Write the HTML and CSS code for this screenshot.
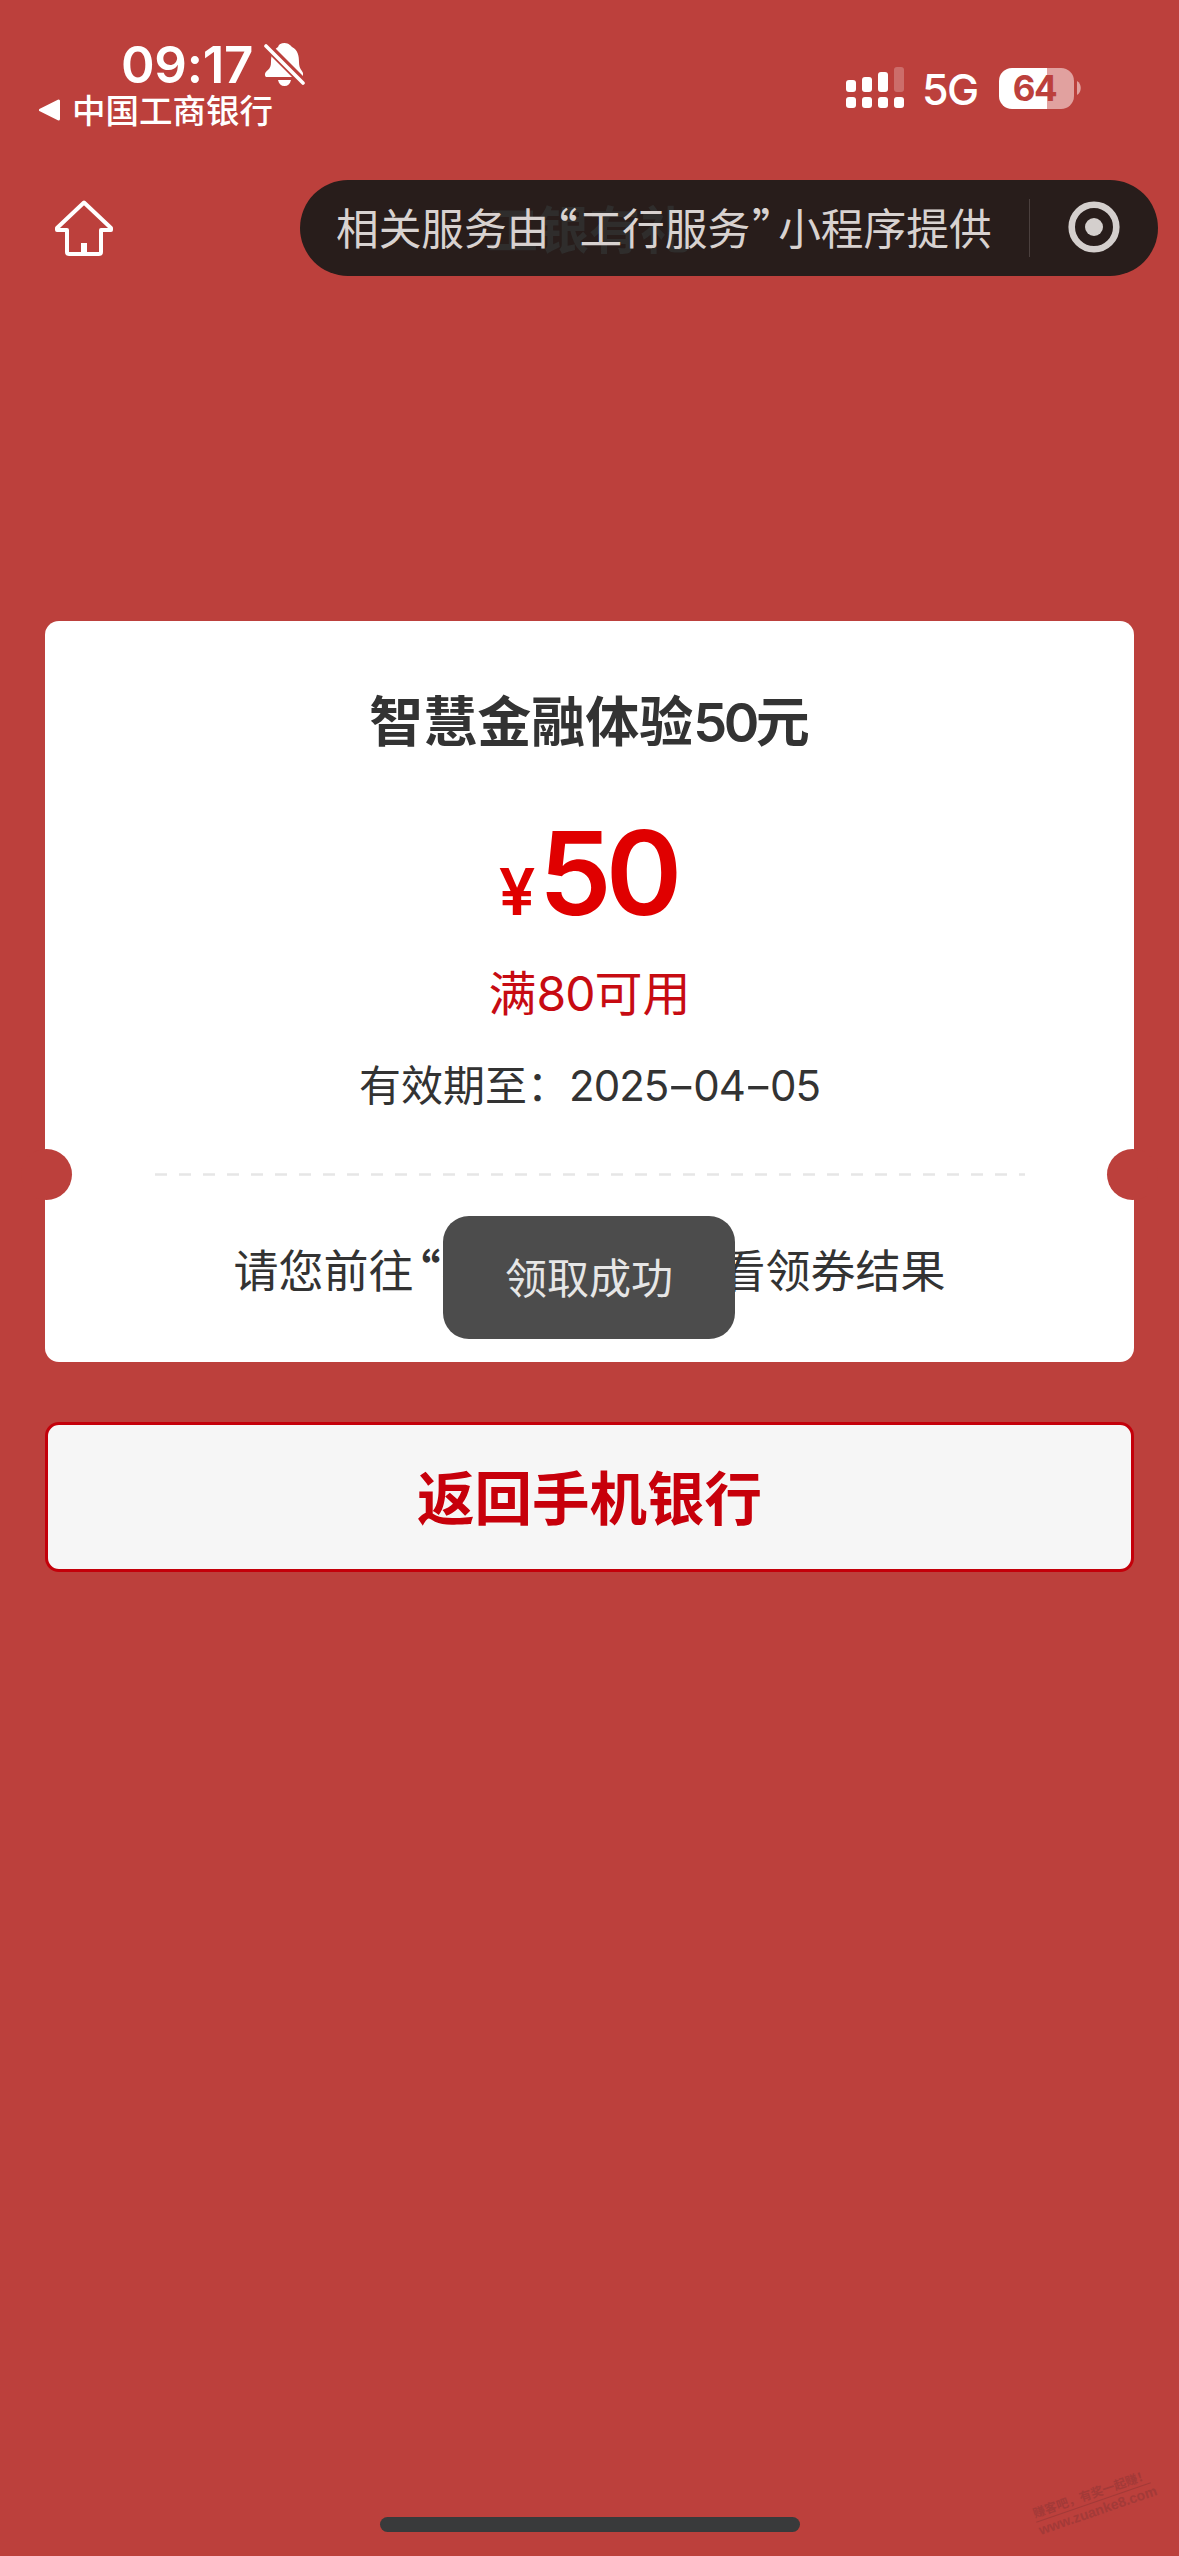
FILE: index.html
```html
<!DOCTYPE html>
<html lang="zh-CN">
<head>
<meta charset="utf-8">
<title>领取成功</title>
<link rel="stylesheet" href="styles.css">
</head>
<body>
<div class="screen">
  <header class="status">
    <div class="status-left">
      <div class="clock-row">
        <span class="clock">09:17</span>
        <svg class="bell" width="42" height="46" viewBox="0 0 42 46">
          <path fill="#fff" d="M20.500 1C25 1 27 4 28 5C34 8 35 14 35 20C35 27 38 28 39 31V35H2C0 33 1 30 4 28C6 26 7 24 7 20C7 13 9 8 14 5C15 2 17 1 20.500 1ZM14 38H27C26 42 24 44 20.500 44S15 42 14 38Z"/>
          <path stroke="#bc403c" stroke-width="8.500" d="M0 1L42 43"/>
          <path stroke="#fff" stroke-width="3.600" stroke-linecap="round" d="M2 4L39 41"/>
        </svg>
      </div>
      <div class="back-row">
        <svg width="24" height="22" viewBox="0 0 24 22"><path fill="#fff" stroke="#fff" stroke-width="3" stroke-linejoin="round" d="M2.500 11L20.500 2V20Z"/></svg>
        <span>中国工商银行</span>
      </div>
    </div>
    <div class="status-right">
      <svg width="58" height="42" viewBox="0 0 58 42" fill="#fff">
        <rect x="0" y="30" width="10" height="11" rx="3"/><rect x="16" y="30" width="10" height="11" rx="3"/><rect x="32" y="30" width="10" height="11" rx="3"/><rect x="48" y="30" width="10" height="11" rx="3"/>
        <rect x="0" y="13" width="10" height="12" rx="3"/><rect x="16" y="10" width="10" height="15" rx="3"/><rect x="32" y="5" width="10" height="20" rx="3"/><rect x="48" y="0" width="10" height="25" rx="3" opacity=".24"/>
      </svg>
      <span class="network">5G</span>
      <div class="battery"><span>64</span></div>
      <svg class="nub" width="4" height="14" viewBox="0 0 4 14"><path fill="#e1a19f" d="M0 0C5 3 5 11 0 14Z"/></svg>
    </div>
  </header>

  <nav class="nav">
    <svg class="home" width="60" height="58" viewBox="0 0 60 58" fill="none" stroke="#fff" stroke-width="4" stroke-linejoin="round">
      <path d="M30 3.500L3 29V31H13V53Q13 55 15 55H45Q47 55 47 53V31H57V29Z"/><path stroke-width="6" d="M30 44V55"/>
    </svg>
    <div class="pill">
      <span class="page-title">工银有礼</span>
      <span class="provider">相关服务由<i class="q open">“</i>工行服务<i class="q close">”</i>小程序提供</span>
      <span class="divider"></span>
      <svg class="target" width="52" height="52" viewBox="0 0 52 52"><circle cx="26" cy="26" r="22.300" fill="none" stroke="#d4cfcd" stroke-width="6.600"/><circle cx="26" cy="26" r="9" fill="#d4cfcd"/></svg>
    </div>
  </nav>

  <main>
    <section class="coupon">
      <h1>智慧金融体验<b>50</b>元</h1>
      <p class="amount"><span class="yen">¥</span><span class="value">50</span></p>
      <p class="limit">满<b>80</b>可用</p>
      <p class="expiry">有效期至：<b>2025<i>-</i>04<i>-</i>05</b></p>
      <div class="tear"><svg width="874" height="3" viewBox="0 0 874 3"><path d="M2 1.500H872" stroke="#e6e6e6" stroke-width="2.500" stroke-dasharray="12 12"/></svg></div>
      <p class="hint">请您前往<i class="q open">“</i>我的<i class="dash">-</i>卡券<i class="q close">”</i>查看领券结果</p>
      <div class="toast">领取成功</div>
    </section>
    <button class="return">返回手机银行</button>
  </main>

  <div class="watermark"><span>赚客吧，有奖一起赚！</span><span class="site">www.zuanke8.com</span></div>
  <div class="home-bar"></div>
</div>
</body>
</html>
```
FILE: styles.css
```css
* { box-sizing: border-box; }
body { margin: 0; }
h1, p { margin: 0; font-weight: 400; }
i { font-style: normal; }
b { font-weight: inherit; font-family: Inter, sans-serif; }

.screen {
  position: relative;
  display: flex;
  flex-direction: column;
  width: 1179px;
  height: 2556px;
  overflow: hidden;
  background: #bc403c;
  font-family: "Noto Sans CJK SC", sans-serif;
  color: #333;
}

.status { display: flex; justify-content: space-between; height: 180px; padding: 38px 98px 0 38px; color: #fff; }
.clock-row { display: flex; height: 52px; padding-left: 83px; align-items: center; }
.clock { width: 143px; margin-top: 2px; font: 600 51px/52px Inter, sans-serif; letter-spacing: -0.300px; white-space: nowrap; }
.bell { margin-top: 2px; }
.back-row { display: flex; align-items: center; gap: 10px; height: 40px; font-size: 33.500px; line-height: 38px; font-weight: 500; }
.back-row span { height: 40px; }
.status-right { display: flex; height: 42px; margin-top: 29px; align-items: center; }
.network { width: 57px; margin: 1px 0 0 18px; font: 500 43px/42px Inter, sans-serif; letter-spacing: -1.500px; }
.battery { width: 75px; height: 41px; margin-left: 20px; border-radius: 13px; background: linear-gradient(90deg, #fff 64%, #e1a19f 64%); color: #bc403c; font: 700 35px/41px Inter, sans-serif; letter-spacing: -1.500px; text-align: center; padding-right: 4px; }
.nub { margin-left: 3px; }

.nav { display: flex; justify-content: space-between; height: 96px; padding: 0 21px 0 54px; }
.home { margin-top: 19px; }
.pill { position: relative; display: flex; align-items: center; width: 858px; height: 96px; padding-left: 36px; border-radius: 48px; background: #281d1b; color: #d8d2d0; }
.page-title { position: absolute; left: 187px; top: 11px; font-size: 51px; line-height: 72px; font-weight: 700; color: #2f2d2c; }
.provider { position: relative; width: 693px; font-size: 42.700px; line-height: 92px; height: 96px; white-space: nowrap; }
.q { display: inline-block; width: 28px; font-feature-settings: "halt"; }
.provider .q { font-weight: 500; }
.provider .open { width: 28px; margin-right: 2px; text-align: right; }
.provider .close { padding-left: 2px; text-align: left; }
.divider { width: 1px; height: 58px; background: #4b403e; }
.target { margin: -2px 0 0 38px; }

main { display: flex; flex-direction: column; gap: 60px; padding: 345px 45px 0; }
.coupon { position: relative; display: flex; flex-direction: column; align-items: center; height: 741px; padding-top: 58px; border-radius: 14px; background: #fff; white-space: nowrap; }
.coupon::before, .coupon::after { content: ""; position: absolute; top: 528px; width: 51px; height: 51px; border-radius: 50%; background: #bc403c; }
.coupon::before { left: -24px; }
.coupon::after { right: -24px; }
h1 { height: 80px; font-size: 54px; line-height: 80px; font-weight: 700; }
h1 b { font-weight: 600; letter-spacing: -3.500px; }
.amount { display: flex; align-items: baseline; height: 142px; margin-top: 43px; color: #e00000; font: 600 116px/142px Inter, sans-serif; }
.yen { width: 40px; margin-left: -4px; font-size: 65px; }
.value { letter-spacing: -6px; }
.limit { height: 72px; margin-top: 10px; font-size: 48px; line-height: 72px; color: #c70b12; }
.limit b { letter-spacing: -1px; }
.expiry { height: 64px; margin-top: 25px; font-size: 42px; line-height: 64px; }
.expiry b { letter-spacing: -1px; }
.expiry i { display: inline-block; width: 25px; text-align: center; transform: scaleX(1.500); }
.tear { display: flex; height: 3px; margin-top: 58px; }
.hint { height: 68px; margin-top: 59px; font-size: 45px; line-height: 68px; }
.hint .q { font-weight: 700; }
.hint .open { text-align: right; width: 27px; margin-right: 1px; }
.hint .dash { display: inline-block; width: 26px; text-align: center; }
.toast { position: absolute; left: 398px; top: 595px; width: 292px; height: 123px; border-radius: 26px; background: #4c4c4c; color: #e6e6e6; font-size: 42px; line-height: 119px; text-align: center; }
.return { height: 150px; border: 3px solid #c4000a; border-radius: 14px; background: #f6f6f6; color: #c7000b; font: 700 57.500px/138px "Noto Sans CJK SC", sans-serif; padding: 0 0 4px; }

.watermark { position: absolute; left: 1033px; top: 2485px; display: flex; flex-direction: column; width: 121px; transform: rotate(-19deg); color: #a33a38; font-size: 12.200px; line-height: 17px; font-weight: 700; white-space: nowrap; }
.watermark .site { border-top: 1px solid #a33a38; font-family: "Liberation Sans", sans-serif; font-size: 14px; }
.home-bar { position: absolute; left: 380px; bottom: 24px; width: 420px; height: 15px; border-radius: 8px; background: #393a3b; }
```
